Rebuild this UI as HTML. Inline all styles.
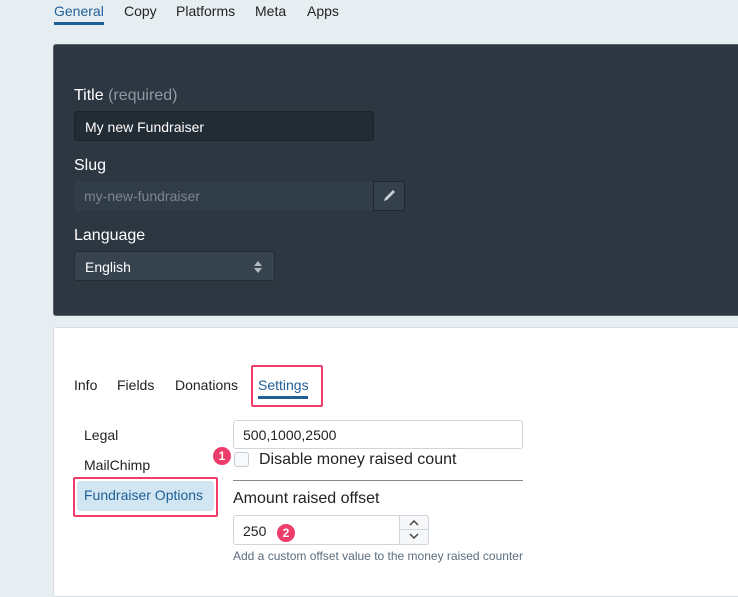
<!DOCTYPE html>
<html><head><style>
*{box-sizing:border-box;margin:0;padding:0}
body{width:738px;height:581px;overflow:hidden;background:#e7eef2;font-family:"Liberation Sans",sans-serif;position:relative;color:#222}
.a{position:absolute}
.tab{font-size:14px;top:3px}
.dark{left:53px;top:44px;width:700px;height:272px;background:#2c3741;border:1px solid #59636c;border-radius:3px}
.lbl{color:#fff;font-size:16px}
.white{left:53px;top:327px;width:700px;height:270px;background:#fff;border:1px solid #d7dde2;border-radius:3px}
.red{border:2px solid #ee3d6a;border-radius:2px}
.badge{width:18px;height:18px;border-radius:50%;background:#ee3d6a;color:#fff;font-size:12px;font-weight:bold;text-align:center;line-height:18px}
</style></head><body>
<div class="a tab" style="left:54px;color:#1f5f96">General</div>
<div class="a" style="left:54px;top:22px;width:50px;height:3px;background:#1f5f96"></div>
<div class="a tab" style="left:124px">Copy</div>
<div class="a tab" style="left:176px">Platforms</div>
<div class="a tab" style="left:255px">Meta</div>
<div class="a tab" style="left:307px">Apps</div>

<div class="a dark"></div>
<div class="a lbl" style="left:74px;top:87px">Title <span style="color:#8e99a3">(required)</span></div>
<div class="a" style="left:74px;top:111px;width:300px;height:30px;background:#222c35;border:1px solid #1a232b;border-radius:3px;color:#fff;font-size:14px;padding:7px 10px">My new Fundraiser</div>
<div class="a lbl" style="left:74px;top:157px">Slug</div>
<div class="a" style="left:74px;top:181px;width:300px;height:30px;background:#303d49;border-radius:3px 0 0 3px;color:#7a8590;font-size:14px;padding:7px 10px">my-new-fundraiser</div>
<div class="a" style="left:373px;top:181px;width:32px;height:30px;background:#34414d;border:1px solid #1f2830;border-radius:0 3px 3px 0">
<svg width="30" height="28" viewBox="0 0 30 28"><path d="M10 19 L11 16 L19 8 L21 10 L13 18 Z" fill="#c8d0d6"/></svg></div>
<div class="a lbl" style="left:74px;top:227px">Language</div>
<div class="a" style="left:74px;top:251px;width:201px;height:30px;background:#36434f;border:1px solid #222b33;border-radius:3px;color:#fff;font-size:14px;padding:7px 10px">English
<svg class="a" style="left:178px;top:8px" width="10" height="14"><path d="M1 6 L5 1 L9 6Z M1 8 L5 13 L9 8Z" fill="#b0b9c0"/></svg></div>

<div class="a white"></div>
<div class="a" style="left:74px;top:377px;font-size:14px">Info</div>
<div class="a" style="left:117px;top:377px;font-size:14px">Fields</div>
<div class="a" style="left:175px;top:377px;font-size:14px">Donations</div>
<div class="a" style="left:258px;top:377px;font-size:14px;color:#1f5f96">Settings</div>
<div class="a" style="left:258px;top:396px;width:50px;height:3px;background:#1f5f96"></div>
<div class="a red" style="left:251px;top:365px;width:72px;height:42px"></div>

<div class="a" style="left:84px;top:427px;font-size:14px">Legal</div>
<div class="a" style="left:84px;top:457px;font-size:14px">MailChimp</div>
<div class="a" style="left:77px;top:481px;width:137px;height:30px;background:#d2e5f2;border-radius:3px"></div>
<div class="a" style="left:84px;top:487px;font-size:14px;color:#1f5f96">Fundraiser Options</div>
<div class="a red" style="left:73px;top:477px;width:145px;height:40px"></div>

<div class="a" style="left:233px;top:420px;width:290px;height:29px;border:1px solid #cfd5da;border-radius:3px;font-size:14px;padding:6px 9px">500,1000,2500</div>
<div class="a" style="left:234px;top:452px;width:15px;height:15px;border:1px solid #c7cdd2;border-radius:3px;background:#f7f9fa"></div>
<div class="a badge" style="left:213px;top:447px">1</div>
<div class="a" style="left:259px;top:451px;font-size:16px">Disable money raised count</div>
<div class="a" style="left:233px;top:480px;width:290px;height:1px;background:#888"></div>
<div class="a" style="left:233px;top:490px;font-size:16px">Amount raised offset</div>
<div class="a" style="left:233px;top:515px;width:196px;height:30px;border:1px solid #cfd5da;border-radius:3px;font-size:14px;padding:7px 9px">250</div>
<div class="a" style="left:399px;top:515px;width:30px;height:30px;border:1px solid #cfd5da;border-radius:0 3px 3px 0;background:#f5f7f8"></div>
<div class="a" style="left:399px;top:529px;width:30px;height:1px;background:#cfd5da"></div>
<svg class="a" style="left:408px;top:518px" width="12" height="24"><path d="M2 7 L6 3 L10 7 M2 16 L6 20 L10 16" stroke="#444" stroke-width="1.5" fill="none"/></svg>
<div class="a badge" style="left:277px;top:524px">2</div>
<div class="a" style="left:233px;top:549px;font-size:12px;color:#5c6d7c">Add a custom offset value to the money raised counter</div>
</body></html>
